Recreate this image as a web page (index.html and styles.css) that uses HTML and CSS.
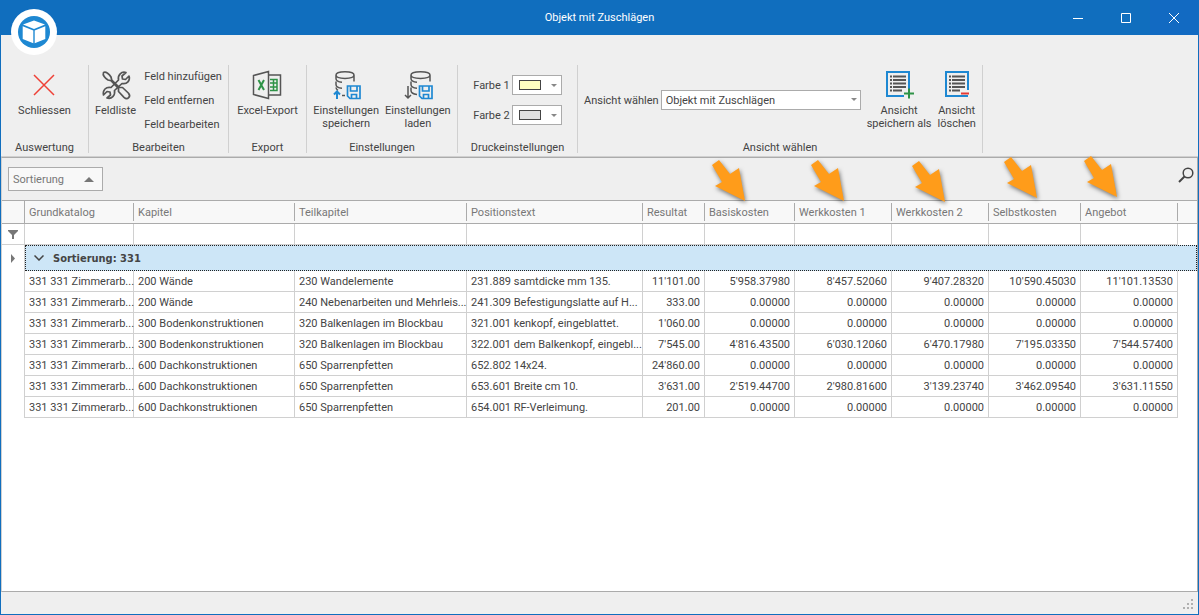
FILE: index.html
```
<!DOCTYPE html>
<html lang="de">
  <head>
    <meta charset="UTF-8" />
    <meta name="viewport" content="width=device-width, initial-scale=1.0" />
    <title>Objekt mit Zuschlägen</title>
    <link rel="stylesheet" href="styles.css">
  </head>
  <body>
    <div class="window">
      <header class="titlebar">
        <svg class="logo" viewBox="0 0 46 46" aria-hidden="true">
          <circle cx="23" cy="23" r="23" fill="#fff" />
          <circle cx="23" cy="23" r="16" fill="#1e88d2" />
          <path fill="#fff" d="M23 11.500 34 15.500 23 20 12 15.500ZM11.700 17.200 22.300 21.500V34.200L11.700 30ZM34.300 17.200 23.700 21.500V34.200L34.300 30Z" />
        </svg>
        <h1>Objekt mit Zuschlägen</h1>
        <div class="window-buttons">
          <button aria-label="Minimieren"><svg viewBox="0 0 12 12"><path d="M1 6.500H11" /></svg></button>
          <button aria-label="Maximieren"><svg viewBox="0 0 12 12"><path d="M1.500 1.500H10.500V10.500H1.500Z" /></svg></button>
          <button class="close" aria-label="Fenster schliessen"><svg viewBox="0 0 12 12"><path d="M1 1 11 11M11 1 1 11" /></svg></button>
        </div>
      </header>

      <div class="ribbon">
        <section class="group group-close">
          <div class="group-body">
            <button class="tool">
              <svg viewBox="0 0 32 32"><path d="M6 6 26 26M26 6 6 26" stroke="#ef4036" /></svg>
              Schliessen
            </button>
          </div>
          <h2>Auswertung</h2>
        </section>

        <section class="group group-edit">
          <div class="group-body">
            <button class="tool">
              <svg viewBox="0 0 32 32">
                <g stroke="#555" stroke-width="1.700" stroke-linejoin="round">
                  <path fill="#efefef" d="M26 3.500C21.500 2 17.500 6 18.500 11L11 18.500C6 17.500 2.500 21 3.500 26L7 22.500 10 23 10.500 26 7 29C11.500 30.500 15.500 26.500 14.500 21.500L22 14.500C27 15.500 30.500 11.500 29 7L25.500 10.500 22.500 10 22 7Z" />
                  <path fill="#efefef" d="M3.500 3.500C6 2.300 9.300 5 11 8L11.800 11.200 19.500 18.500 22.500 18.500 28.300 24C31.500 27.500 27.500 31.500 24 28.300L18.500 22.500V19.500L11.200 11.800 8 11C5 9.300 2.300 6 3.500 3.500Z" />
                </g>
              </svg>
              Feldliste
            </button>
            <div class="tool-list">
              <button>Feld hinzufügen</button>
              <button>Feld entfernen</button>
              <button>Feld bearbeiten</button>
            </div>
          </div>
          <h2>Bearbeiten</h2>
        </section>

        <section class="group group-export">
          <div class="group-body">
            <button class="tool">
              <svg viewBox="0 0 32 32">
                <path d="M2.500 6.500 17.500 2.500V29.500L2.500 25.500ZM18 6H29.500V26H18" stroke="#555" />
                <path d="M7.500 11 13 21M13 11 7.500 21" stroke="#2e9347" stroke-width="2" />
                <path d="M19 10.500H26V21.500H19M19 14H26M19 18H26M22.500 10.500V21.500" stroke="#2e9347" stroke-width="1.500" />
              </svg>
              Excel-Export
            </button>
          </div>
          <h2>Export</h2>
        </section>

        <section class="group group-settings">
          <div class="group-body">
            <button class="tool">
              <svg viewBox="0 0 32 32">
                <path d="M6 6C6 1.500 24 1.500 24 6C24 10.500 6 10.500 6 6V9.500C6 12 9 13 12 13.200M24 6V12.500M6 12.500V15.500C6 18 9 19 12 19.200M6 18.500C6 20 7 20.700 8 21.300" stroke="#555" />
                <path d="M12 26.500H15" stroke="#555" />
                <path d="M7 30V22.500M4 25.500 7 22.500 10 25.500" stroke="#1e88d2" stroke-width="2" />
                <path d="M17.500 17H27L30 17V29.500H20L17.500 27ZM20.500 17V22H27V17M21.500 29V25.500H26.500V29" stroke="#1e88d2" stroke-width="1.700" />
              </svg>
              Einstellungen<br>speichern
            </button>
            <button class="tool">
              <svg viewBox="0 0 32 32">
                <path d="M9 6C9 1.500 28 1.500 28 6C28 10.500 9 10.500 9 6V9.500C9 12 12 13 15 13.200M28 6V12.500M9 12.500V15.500C9 18 12 19 15 19.200M9 18.500V21.500C9 23.500 11 25 15 25.500" stroke="#555" />
                <path d="M6 17V29M3 26 6 29 9 26" stroke="#555" />
                <path d="M17.500 17H30V29.500H20L17.500 27ZM20.500 17V22H27V17M21.500 29V25.500H26.500V29" stroke="#1e88d2" stroke-width="1.700" />
              </svg>
              Einstellungen<br>laden
            </button>
          </div>
          <h2>Einstellungen</h2>
        </section>

        <section class="group group-print">
          <div class="group-body colors">
            <div class="field">
              <label for="color1">Farbe 1</label>
              <button class="color-picker" id="color1"><span class="swatch yellow"></span></button>
            </div>
            <div class="field">
              <label for="color2">Farbe 2</label>
              <button class="color-picker" id="color2"><span class="swatch grey"></span></button>
            </div>
          </div>
          <h2>Druckeinstellungen</h2>
        </section>

        <section class="group group-view">
          <div class="group-body">
            <div class="field">
              <label for="view">Ansicht wählen</label>
              <div class="select">
                <select id="view">
                  <option>Objekt mit Zuschlägen</option>
                </select>
              </div>
            </div>
            <button class="tool">
              <svg viewBox="0 0 32 32">
                <path d="M26 20V3H4V27H21" stroke="#1e88d2" stroke-width="2" />
                <path d="M10 7.500H23M10 11H23M10 14.500H23M10 18H23M10 21.500H19" stroke="#555" stroke-width="1.800" />
                <path d="M7 7.500H9M7 11H9M7 14.500H9M7 18H9M7 21.500H9" stroke="#555" stroke-width="1.800" />
                <path d="M26 19.500V29.500M21 24.500H31" stroke="#2e9347" stroke-width="2" />
              </svg>
              Ansicht<br>speichern als
            </button>
            <button class="tool">
              <svg viewBox="0 0 32 32">
                <path d="M27 21V3H5V27H27" stroke="#1e88d2" stroke-width="2" />
                <path d="M11 7.500H24M11 11H24M11 14.500H24M11 18H24M11 21.500H19" stroke="#555" stroke-width="1.800" />
                <path d="M8 7.500H10M8 11H10M8 14.500H10M8 18H10M8 21.500H10" stroke="#555" stroke-width="1.800" />
                <path d="M20 24.500H28" stroke="#e53a35" stroke-width="2" />
              </svg>
              Ansicht<br>löschen
            </button>
          </div>
          <h2>Ansicht wählen</h2>
        </section>
      </div>

      <main class="grid-panel">
        <div class="group-panel">
          <button class="sort-chip">Sortierung</button>
          <button class="search" aria-label="Suchen">
            <svg viewBox="0 0 16 16"><circle cx="10" cy="6" r="4.800" /><path d="M6.500 9.500 1 15" stroke-width="2" /></svg>
          </button>
        </div>

        <table>
          <colgroup>
            <col class="col-indicator">
            <col class="col-catalog">
            <col class="col-chapter">
            <col class="col-subchapter">
            <col class="col-text">
            <col class="col-result">
            <col class="col-base">
            <col class="col-cost">
            <col class="col-cost">
            <col class="col-self">
            <col class="col-cost">
            <col>
          </colgroup>
          <thead>
            <tr class="head">
              <td></td>
              <th>Grundkatalog</th>
              <th>Kapitel</th>
              <th>Teilkapitel</th>
              <th>Positionstext</th>
              <th>Resultat</th>
              <th>Basiskosten</th>
              <th>Werkkosten 1</th>
              <th>Werkkosten 2</th>
              <th>Selbstkosten</th>
              <th>Angebot</th>
              <td></td>
            </tr>
            <tr class="filter">
              <td class="indicator"><svg viewBox="0 0 10 9"><path d="M0 0H10V1L6 5V9H4V5L0 1Z" /></svg></td>
              <td><input aria-label="Filter Grundkatalog"></td>
              <td><input aria-label="Filter Kapitel"></td>
              <td><input aria-label="Filter Teilkapitel"></td>
              <td><input aria-label="Filter Positionstext"></td>
              <td><input aria-label="Filter Resultat"></td>
              <td><input aria-label="Filter Basiskosten"></td>
              <td><input aria-label="Filter Werkkosten 1"></td>
              <td><input aria-label="Filter Werkkosten 2"></td>
              <td><input aria-label="Filter Selbstkosten"></td>
              <td><input aria-label="Filter Angebot"></td>
              <td></td>
            </tr>
          </thead>
          <tbody>
            <tr class="group-row">
              <td class="indicator"><svg viewBox="0 0 10 9"><path d="M3 0 7 4.500 3 9Z" /></svg></td>
              <td colspan="11">
                <button>
                  <svg viewBox="0 0 10 6"><path d="M0.500 0.500 5 5 9.500 0.500" /></svg>
                  Sortierung: 331
                </button>
              </td>
            </tr>
            <tr>
              <td></td>
              <td>331 331 Zimmerarb...</td>
              <td>200 Wände</td>
              <td>230 Wandelemente</td>
              <td>231.889 samtdicke mm 135.</td>
              <td class="num">11'101.00</td>
              <td class="num">5'958.37980</td>
              <td class="num">8'457.52060</td>
              <td class="num">9'407.28320</td>
              <td class="num">10'590.45030</td>
              <td class="num">11'101.13530</td>
              <td></td>
            </tr>
            <tr>
              <td></td>
              <td>331 331 Zimmerarb...</td>
              <td>200 Wände</td>
              <td>240 Nebenarbeiten und Mehrleis...</td>
              <td>241.309 Befestigungslatte auf H...</td>
              <td class="num">333.00</td>
              <td class="num">0.00000</td>
              <td class="num">0.00000</td>
              <td class="num">0.00000</td>
              <td class="num">0.00000</td>
              <td class="num">0.00000</td>
              <td></td>
            </tr>
            <tr>
              <td></td>
              <td>331 331 Zimmerarb...</td>
              <td>300 Bodenkonstruktionen</td>
              <td>320 Balkenlagen im Blockbau</td>
              <td>321.001 kenkopf, eingeblattet.</td>
              <td class="num">1'060.00</td>
              <td class="num">0.00000</td>
              <td class="num">0.00000</td>
              <td class="num">0.00000</td>
              <td class="num">0.00000</td>
              <td class="num">0.00000</td>
              <td></td>
            </tr>
            <tr>
              <td></td>
              <td>331 331 Zimmerarb...</td>
              <td>300 Bodenkonstruktionen</td>
              <td>320 Balkenlagen im Blockbau</td>
              <td>322.001 dem Balkenkopf, eingebl...</td>
              <td class="num">7'545.00</td>
              <td class="num">4'816.43500</td>
              <td class="num">6'030.12060</td>
              <td class="num">6'470.17980</td>
              <td class="num">7'195.03350</td>
              <td class="num">7'544.57400</td>
              <td></td>
            </tr>
            <tr>
              <td></td>
              <td>331 331 Zimmerarb...</td>
              <td>600 Dachkonstruktionen</td>
              <td>650 Sparrenpfetten</td>
              <td>652.802 14x24.</td>
              <td class="num">24'860.00</td>
              <td class="num">0.00000</td>
              <td class="num">0.00000</td>
              <td class="num">0.00000</td>
              <td class="num">0.00000</td>
              <td class="num">0.00000</td>
              <td></td>
            </tr>
            <tr>
              <td></td>
              <td>331 331 Zimmerarb...</td>
              <td>600 Dachkonstruktionen</td>
              <td>650 Sparrenpfetten</td>
              <td>653.601 Breite cm 10.</td>
              <td class="num">3'631.00</td>
              <td class="num">2'519.44700</td>
              <td class="num">2'980.81600</td>
              <td class="num">3'139.23740</td>
              <td class="num">3'462.09540</td>
              <td class="num">3'631.11550</td>
              <td></td>
            </tr>
            <tr>
              <td></td>
              <td>331 331 Zimmerarb...</td>
              <td>600 Dachkonstruktionen</td>
              <td>650 Sparrenpfetten</td>
              <td>654.001 RF-Verleimung.</td>
              <td class="num">201.00</td>
              <td class="num">0.00000</td>
              <td class="num">0.00000</td>
              <td class="num">0.00000</td>
              <td class="num">0.00000</td>
              <td class="num">0.00000</td>
              <td></td>
            </tr>
          </tbody>
        </table>

        <!-- arrows pointing at the cost columns -->
        <svg class="arrows" viewBox="0 0 420 56" aria-hidden="true">
          <defs>
            <path id="arrow" d="M11 7 22 21 31 15 37 48 7 33 14 29 4 12Z" />
          </defs>
          <use href="#arrow" />
          <use href="#arrow" x="99" />
          <use href="#arrow" x="200" y="1" />
          <use href="#arrow" x="292" y="-3" />
          <use href="#arrow" x="372" y="-4" />
        </svg>
      </main>

      <footer class="statusbar">
        <svg viewBox="0 0 10 10" aria-hidden="true">
          <path d="M8 0h2v2h-2zM4 4h2v2h-2zM8 4h2v2h-2zM0 8h2v2h-2zM4 8h2v2h-2zM8 8h2v2h-2z" />
        </svg>
      </footer>
    </div>
  </body>
</html>
```
FILE: styles.css
```
* {
  box-sizing: border-box;
}
body {
  margin: 0;
  font-family: Roboto, "DejaVu Sans", sans-serif;
  font-size: 11px;
  line-height: 13px;
  color: #444;
}
button,
input,
select {
  font: inherit;
  color: inherit;
  margin: 0;
  padding: 0;
  border: none;
  background: none;
}
h1,
h2 {
  margin: 0;
  font-size: 11px;
  font-weight: normal;
}
svg {
  display: block;
}
.window {
  min-height: 100vh;
  display: flex;
  flex-direction: column;
  background-color: #efefef;
  border: 1px solid #106ebe;
  border-top: none;
}

/* title bar */
.titlebar {
  position: relative;
  height: 35px;
  display: flex;
  align-items: center;
  justify-content: center;
  background-color: #106ebe;
  color: white;
}
.logo {
  position: absolute;
  left: 10px;
  top: 9px;
  width: 46px;
  height: 46px;
}
.window-buttons {
  position: absolute;
  right: 0;
  top: 0;
  display: flex;
}
.window-buttons button {
  width: 48px;
  height: 35px;
  display: flex;
  align-items: center;
  justify-content: center;
}
.window-buttons .close {
  background-color: #126ac2;
}
.window-buttons svg {
  width: 12px;
  height: 12px;
  fill: none;
  stroke: white;
}

/* ribbon */
.ribbon {
  display: flex;
  padding: 30px 0 3px;
  border-bottom: 1px solid #d0d0d0;
}
.group {
  display: flex;
  flex-direction: column;
  justify-content: space-between;
  height: 88px;
  border-right: 1px solid #d0d0d0;
  text-align: center;
}
.group-body {
  display: flex;
  align-items: flex-start;
  justify-content: center;
  padding-top: 4px;
  white-space: nowrap;
}
.group h2 {
  line-height: 10px;
}
.group-close {
  width: 88px;
}
.group-edit {
  width: 140px;
}
.group-export {
  width: 78px;
}
.group-settings {
  width: 151px;
}
.group-print {
  width: 120px;
}
.group-view {
  width: 405px;
}
.tool svg {
  width: 32px;
  height: 32px;
  margin: 0 auto 3px;
  fill: none;
  stroke-width: 1.5;
}
.tool-list {
  display: flex;
  flex-direction: column;
  gap: 10px;
  padding-left: 8px;
}
.tool-list button {
  height: 14px;
  text-align: left;
}
.group-settings .group-body {
  gap: 6px;
}
.field {
  display: flex;
  align-items: center;
  gap: 2px;
}
.colors {
  flex-direction: column;
  align-items: center;
  gap: 10px;
  padding-top: 10px;
}
.color-picker {
  position: relative;
  width: 50px;
  height: 20px;
  padding-left: 6px;
  background-color: white;
  border: 1px solid #ababab;
}
.swatch {
  display: block;
  width: 22px;
  height: 10px;
  border: 1px solid #444;
}
.swatch.yellow {
  background-color: #ffffc0;
}
.swatch.grey {
  background-color: #e0e0e0;
}
.select {
  position: relative;
  width: 200px;
}
.select select {
  display: block;
  width: 100%;
  height: 20px;
  padding-left: 4px;
  appearance: none;
  background-color: white;
  border: 1px solid #ababab;
}
.select::after,
.color-picker::after {
  content: "";
  position: absolute;
  right: 4px;
  top: 8px;
  border: 3px solid transparent;
  border-top-color: #888;
  border-bottom: none;
}
.group-view .group-body {
  gap: 6px;
  justify-content: flex-start;
  padding-left: 6px;
}
.group-view .field {
  height: 62px;
}

/* grid */
.grid-panel {
  position: relative;
  flex: 1;
  border: 1px solid #ababab;
  border-left-color: #d0d0d0;
  background-color: white;
}
.group-panel {
  display: flex;
  justify-content: space-between;
  height: 42px;
  padding: 9px 3px 8px 6px;
  background-color: #efefef;
}
.sort-chip {
  display: flex;
  align-items: center;
  justify-content: space-between;
  width: 95px;
  height: 24px;
  padding: 0 8px 0 4px;
  border: 1px solid #ababab;
  background-color: #f8f8f8;
  color: #777;
}
.sort-chip::after {
  content: "";
  border: 5px solid transparent;
  border-bottom-color: #777;
  border-top: none;
}
.search {
  height: 16px;
}
.search svg {
  width: 16px;
  height: 16px;
  fill: none;
  stroke: #444;
  stroke-width: 1.5;
}
table {
  width: 100%;
  table-layout: fixed;
  border-collapse: separate;
  border-spacing: 0;
}
.col-indicator {
  width: 23px;
}
.col-catalog {
  width: 109px;
}
.col-chapter {
  width: 161px;
}
.col-subchapter {
  width: 172px;
}
.col-text {
  width: 176px;
}
.col-result {
  width: 62px;
}
.col-base {
  width: 90px;
}
.col-cost {
  width: 97px;
}
.col-self {
  width: 92px;
}
th,
td {
  height: 21px;
  padding: 0 0 0 4px;
  border-right: 1px solid #d0d0d0;
  border-bottom: 1px solid #d0d0d0;
  white-space: nowrap;
}
tbody td:first-child,
tr td:last-child {
  border-bottom: none;
}
tr td:last-child {
  border-right: none;
}
.head th,
.head td:first-child,
.head td:last-child {
  height: 24px;
  border-top: 1px solid #ababab;
  border-bottom: 1px solid #ababab;
  background-color: #f8f8f8;
}
.head td:first-child {
  border-right-color: #ababab;
}
.head th {
  color: #777;
  font-weight: normal;
  text-align: left;
  border-right: none;
  background: linear-gradient(#ababab, #ababab) right center / 1px 18px no-repeat #f8f8f8;
}
.filter td {
  padding: 0;
}
.filter input {
  display: block;
  width: 100%;
  height: 20px;
  padding: 0 4px;
}
td.indicator {
  padding: 0;
}
.indicator svg {
  width: 10px;
  height: 9px;
  margin: 0 auto;
  fill: #777;
}
.group-row td {
  height: 26px;
}
.group-row td:last-child {
  background-color: #cde6f7;
  border: 1px dotted #222;
}
.group-row button {
  display: flex;
  align-items: center;
  gap: 9px;
  padding-left: 4px;
  font-family: "DejaVu Sans Condensed", "DejaVu Sans", sans-serif;
  font-weight: bold;
}
.group-row button svg {
  width: 10px;
  height: 6px;
  fill: none;
  stroke: #444;
  stroke-width: 1.5;
}
.num {
  padding-right: 4px;
  text-align: right;
}
.arrows {
  position: absolute;
  left: 706px;
  top: -5px;
  width: 420px;
  height: 56px;
  fill: #ff9c1a;
  filter: drop-shadow(1px 2px 2px rgba(0, 0, 0, 0.5));
  pointer-events: none;
}

/* status bar */
.statusbar {
  display: flex;
  justify-content: flex-end;
  align-items: flex-end;
  height: 22px;
  padding: 5px;
}
.statusbar svg {
  width: 10px;
  height: 10px;
  fill: #b0b0b0;
}
```
